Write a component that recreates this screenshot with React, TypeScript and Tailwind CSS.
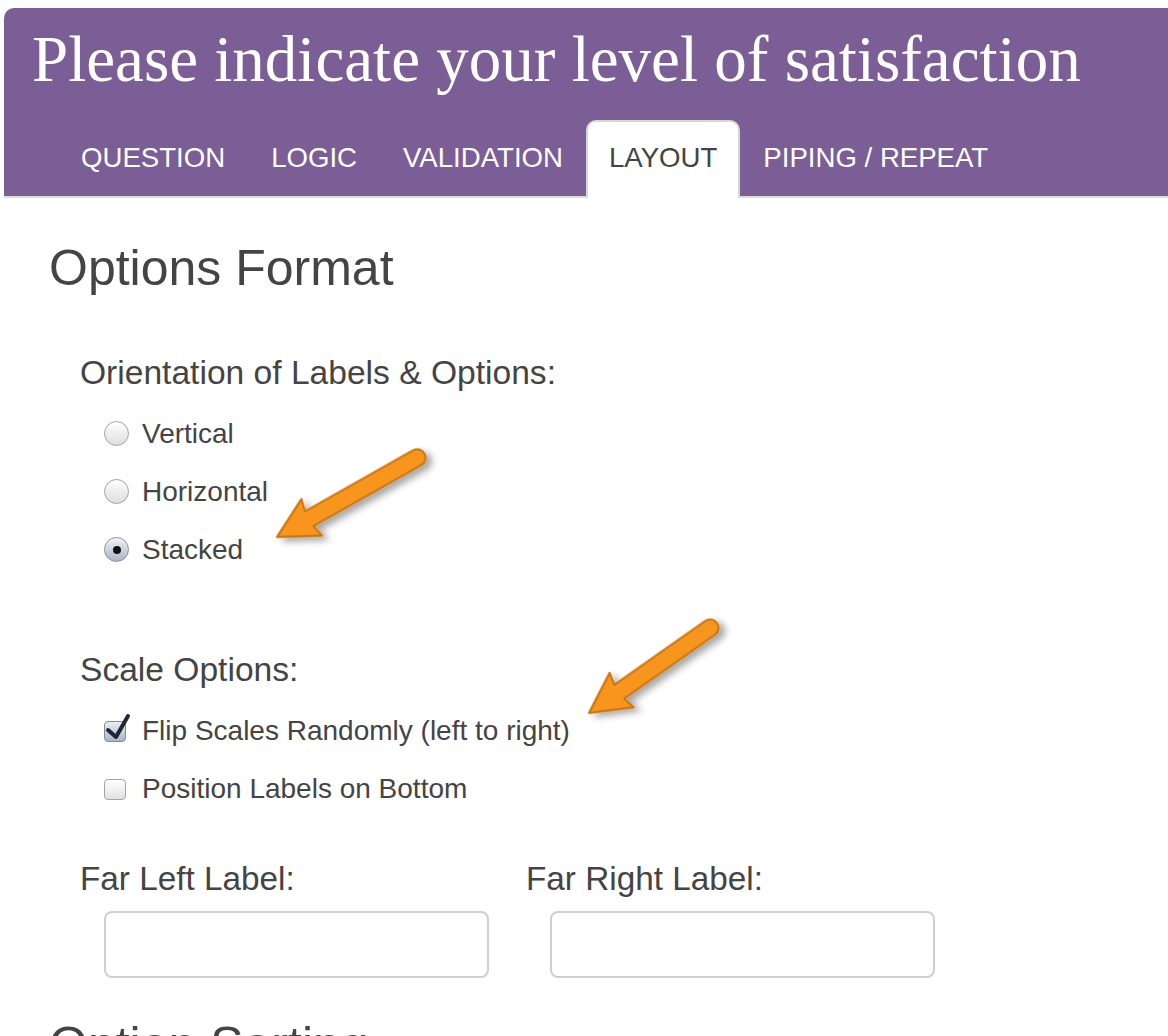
import React from "react";

const tabs = ["QUESTION", "LOGIC", "VALIDATION", "LAYOUT", "PIPING / REPEAT"];

const Radio = ({ checked, label }: { checked?: boolean; label: string }) => (
  <div className="flex h-[58px] items-center">
    <span
      className={
        checked
          ? "flex h-[25px] w-[25px] items-center justify-center rounded-full border border-[#8a8f96] bg-linear-to-b from-[#eef2f7] to-[#a9b6c4] shadow-[inset_0_1px_1px_rgba(255,255,255,0.8)]"
          : "flex h-[25px] w-[25px] items-center justify-center rounded-full border border-[#a3a3a3] bg-linear-to-b from-white to-[#dedede]"
      }
    >
      {checked && <span className="h-[8px] w-[8px] rounded-full bg-[#111]" />}
    </span>
    <span className="ml-[13px] text-[28px] leading-none">{label}</span>
  </div>
);

const Checkbox = ({ checked, label }: { checked?: boolean; label: string }) => (
  <div className="flex h-[58px] items-center">
    <span className="relative flex h-[22px] w-[24px] items-center">
      <span
        className={
          checked
            ? "h-[21px] w-[22px] rounded-[4px] border border-[#858a92] bg-linear-to-b from-[#e9eef4] to-[#aab7c5]"
            : "h-[21px] w-[22px] rounded-[4px] border border-[#a3a3a3] bg-linear-to-b from-white to-[#e2e2e2]"
        }
      />
      {checked && (
        <svg className="absolute left-0 top-[-8px]" width="28" height="30" viewBox="0 0 28 30">
          <path
            d="M4 18 L12 25 L24 4"
            fill="none"
            stroke="#1c2838"
            strokeWidth="4"
            strokeLinecap="round"
            strokeLinejoin="round"
          />
        </svg>
      )}
    </span>
    <span className="ml-[14px] text-[28px] leading-none">{label}</span>
  </div>
);

const Arrow = ({ x, y, angle, length }: { x: number; y: number; angle: number; length: number }) => (
  <g transform={`translate(${x} ${y}) rotate(${angle})`} filter="url(#arrowShadow)">
    <path
      d={`M0,0 L40,21 L37,8.5 L${length},8.5 A8.5,8.5 0 0 0 ${length},-8.5 L37,-8.5 L40,-21 Z`}
      fill="#f8951c"
      stroke="#c8750f"
      strokeWidth="2"
      strokeLinejoin="round"
    />
  </g>
);

export default function App() {
  return (
    <div className="relative min-h-[1036px] w-full overflow-hidden bg-white font-['Liberation_Sans',Arial,sans-serif] text-[#444]">
      {/* purple question header */}
      <div className="ml-[4px] mt-[8px] rounded-tl-[10px] border-b-2 border-[#dcdcdc] bg-[#7b5e95]">
        <h1 className="pl-[28px] pt-[19px] font-['Liberation_Serif',Georgia,serif] text-[65px] font-normal leading-none text-white">
          Please indicate your level of satisfaction
        </h1>
        <div className="mt-[28px] flex h-[76px] pl-[54px]">
          {tabs.map((t) =>
            t === "LAYOUT" ? (
              <div
                key={t}
                className="-mb-[2px] flex h-[78px] items-center rounded-t-[10px] border-2 border-b-0 border-[#d6d6d6] bg-white px-[21px] pb-[4px] text-[27.6px] text-[#444]"
              >
                {t}
              </div>
            ) : (
              <div key={t} className="flex items-center px-[23px] text-[27.6px] text-white">
                {t}
              </div>
            )
          )}
        </div>
      </div>

      {/* layout settings */}
      <div className="pl-[49px]">
        <h2 className="mt-[45px] text-[50px] font-normal leading-none">Options Format</h2>

        <div className="pl-[31px]">
          <div className="mt-[63px] text-[33.6px] leading-none">Orientation of Labels &amp; Options:</div>
          <div className="mt-[15px] pl-[24px]">
            <Radio label="Vertical" />
            <Radio label="Horizontal" />
            <Radio label="Stacked" checked />
          </div>

          <div className="mt-[74px] text-[33.6px] leading-none">Scale Options:</div>
          <div className="mt-[16px] pl-[24px]">
            <Checkbox label="Flip Scales Randomly (left to right)" checked />
            <Checkbox label="Position Labels on Bottom" />
          </div>

          <div className="mt-[44px] grid w-[892px] grid-cols-2">
            <div>
              <div className="text-[33.3px] leading-none">Far Left Label:</div>
              <div className="ml-[24px] mt-[16px] h-[67px] w-[385px] rounded-[8px] border-2 border-[#cfcfcf] bg-white" />
            </div>
            <div>
              <div className="text-[33.3px] leading-none">Far Right Label:</div>
              <div className="ml-[24px] mt-[16px] h-[67px] w-[385px] rounded-[8px] border-2 border-[#cfcfcf] bg-white" />
            </div>
          </div>
        </div>

        <h2 className="mt-[42px] text-[50px] font-normal leading-none">Option Sorting</h2>
      </div>

      {/* callout arrows */}
      <svg className="pointer-events-none absolute left-0 top-0" width="1168" height="1036">
        <defs>
          <filter id="arrowShadow" x="-30%" y="-60%" width="160%" height="220%">
            <feDropShadow dx="3" dy="6" stdDeviation="3.5" floodColor="#000" floodOpacity="0.35" />
          </filter>
        </defs>
        <Arrow x={277} y={537} angle={-29.5} length={161} />
        <Arrow x={589} y={713} angle={-35.1} length={148} />
      </svg>
    </div>
  );
}
